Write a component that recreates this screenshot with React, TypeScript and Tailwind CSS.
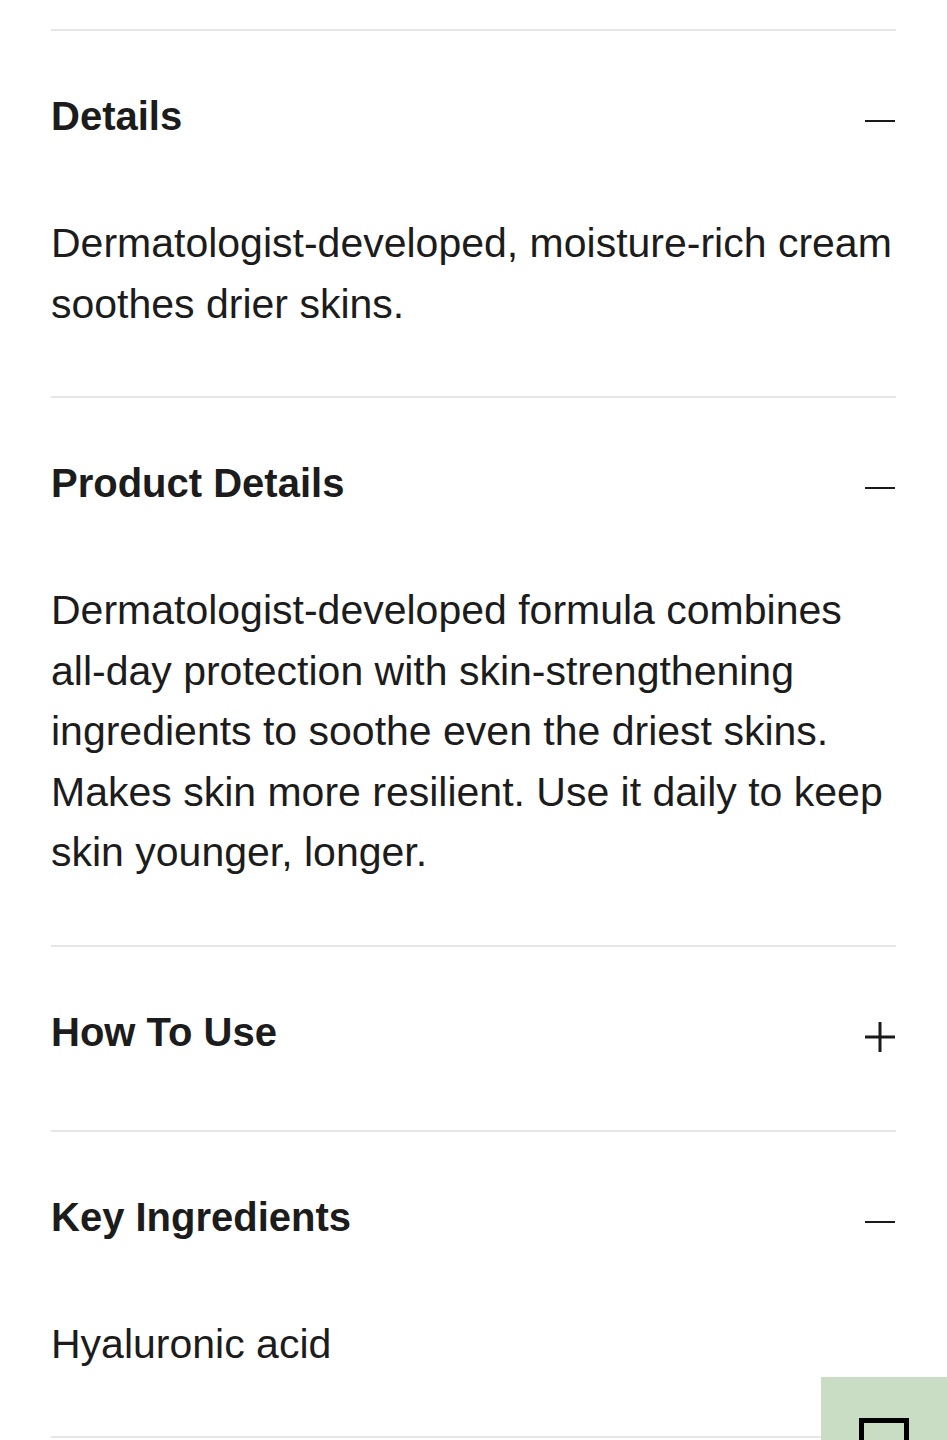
import React from 'react';

type Section = {
  title: string;
  open: boolean;
  body?: string;
};

const sections: Section[] = [
  {
    title: 'Details',
    open: true,
    body: 'Dermatologist-developed, moisture-rich cream soothes drier skins.',
  },
  {
    title: 'Product Details',
    open: true,
    body:
      'Dermatologist-developed formula combines all-day protection with skin-strengthening ingredients to soothe even the driest skins. Makes skin more resilient. Use it daily to keep skin younger, longer.',
  },
  { title: 'How To Use', open: false },
  { title: 'Key Ingredients', open: true, body: 'Hyaluronic acid' },
];

function Toggle({ open }: { open: boolean }) {
  return (
    <svg width="32" height="32" viewBox="0 0 32 32" className="mt-[10px] shrink-0 text-[#1a1a1a]">
      <line x1="1" y1="16" x2="31" y2="16" stroke="currentColor" strokeWidth={open ? 2 : 3} />
      {!open && <line x1="16" y1="1" x2="16" y2="31" stroke="currentColor" strokeWidth="3" />}
    </svg>
  );
}

export default function App() {
  return (
    <div
      className="relative min-h-screen bg-white px-[51px] pt-[29px] text-[#1c1c1c]"
      style={{ fontFamily: '"Liberation Sans", Arial, Helvetica, sans-serif' }}
    >
      {sections.map((s, i) => (
        <section
          key={s.title}
          className={`border-t-2 border-[#e6e6e6] ${i === sections.length - 1 ? 'border-b-2' : ''}`}
        >
          <button className="flex w-full items-center justify-between pt-[61px] pb-[74px] text-left">
            <span className="text-[40px] font-bold leading-[48px]">{s.title}</span>
            <Toggle open={s.open} />
          </button>
          {s.open && s.body && (
            <p className="-mt-[1px] pb-[62px] text-[41px] leading-[60.5px]">{s.body}</p>
          )}
        </section>
      ))}

      {/* floating feedback button */}
      <div className="fixed left-[821px] top-[1377px] h-[80px] w-[126px] overflow-hidden bg-[#c9dcc4]">
        <div className="ml-[38px] mt-[41px] h-[49px] w-[50px] border-[5px] border-black" />
      </div>
    </div>
  );
}
